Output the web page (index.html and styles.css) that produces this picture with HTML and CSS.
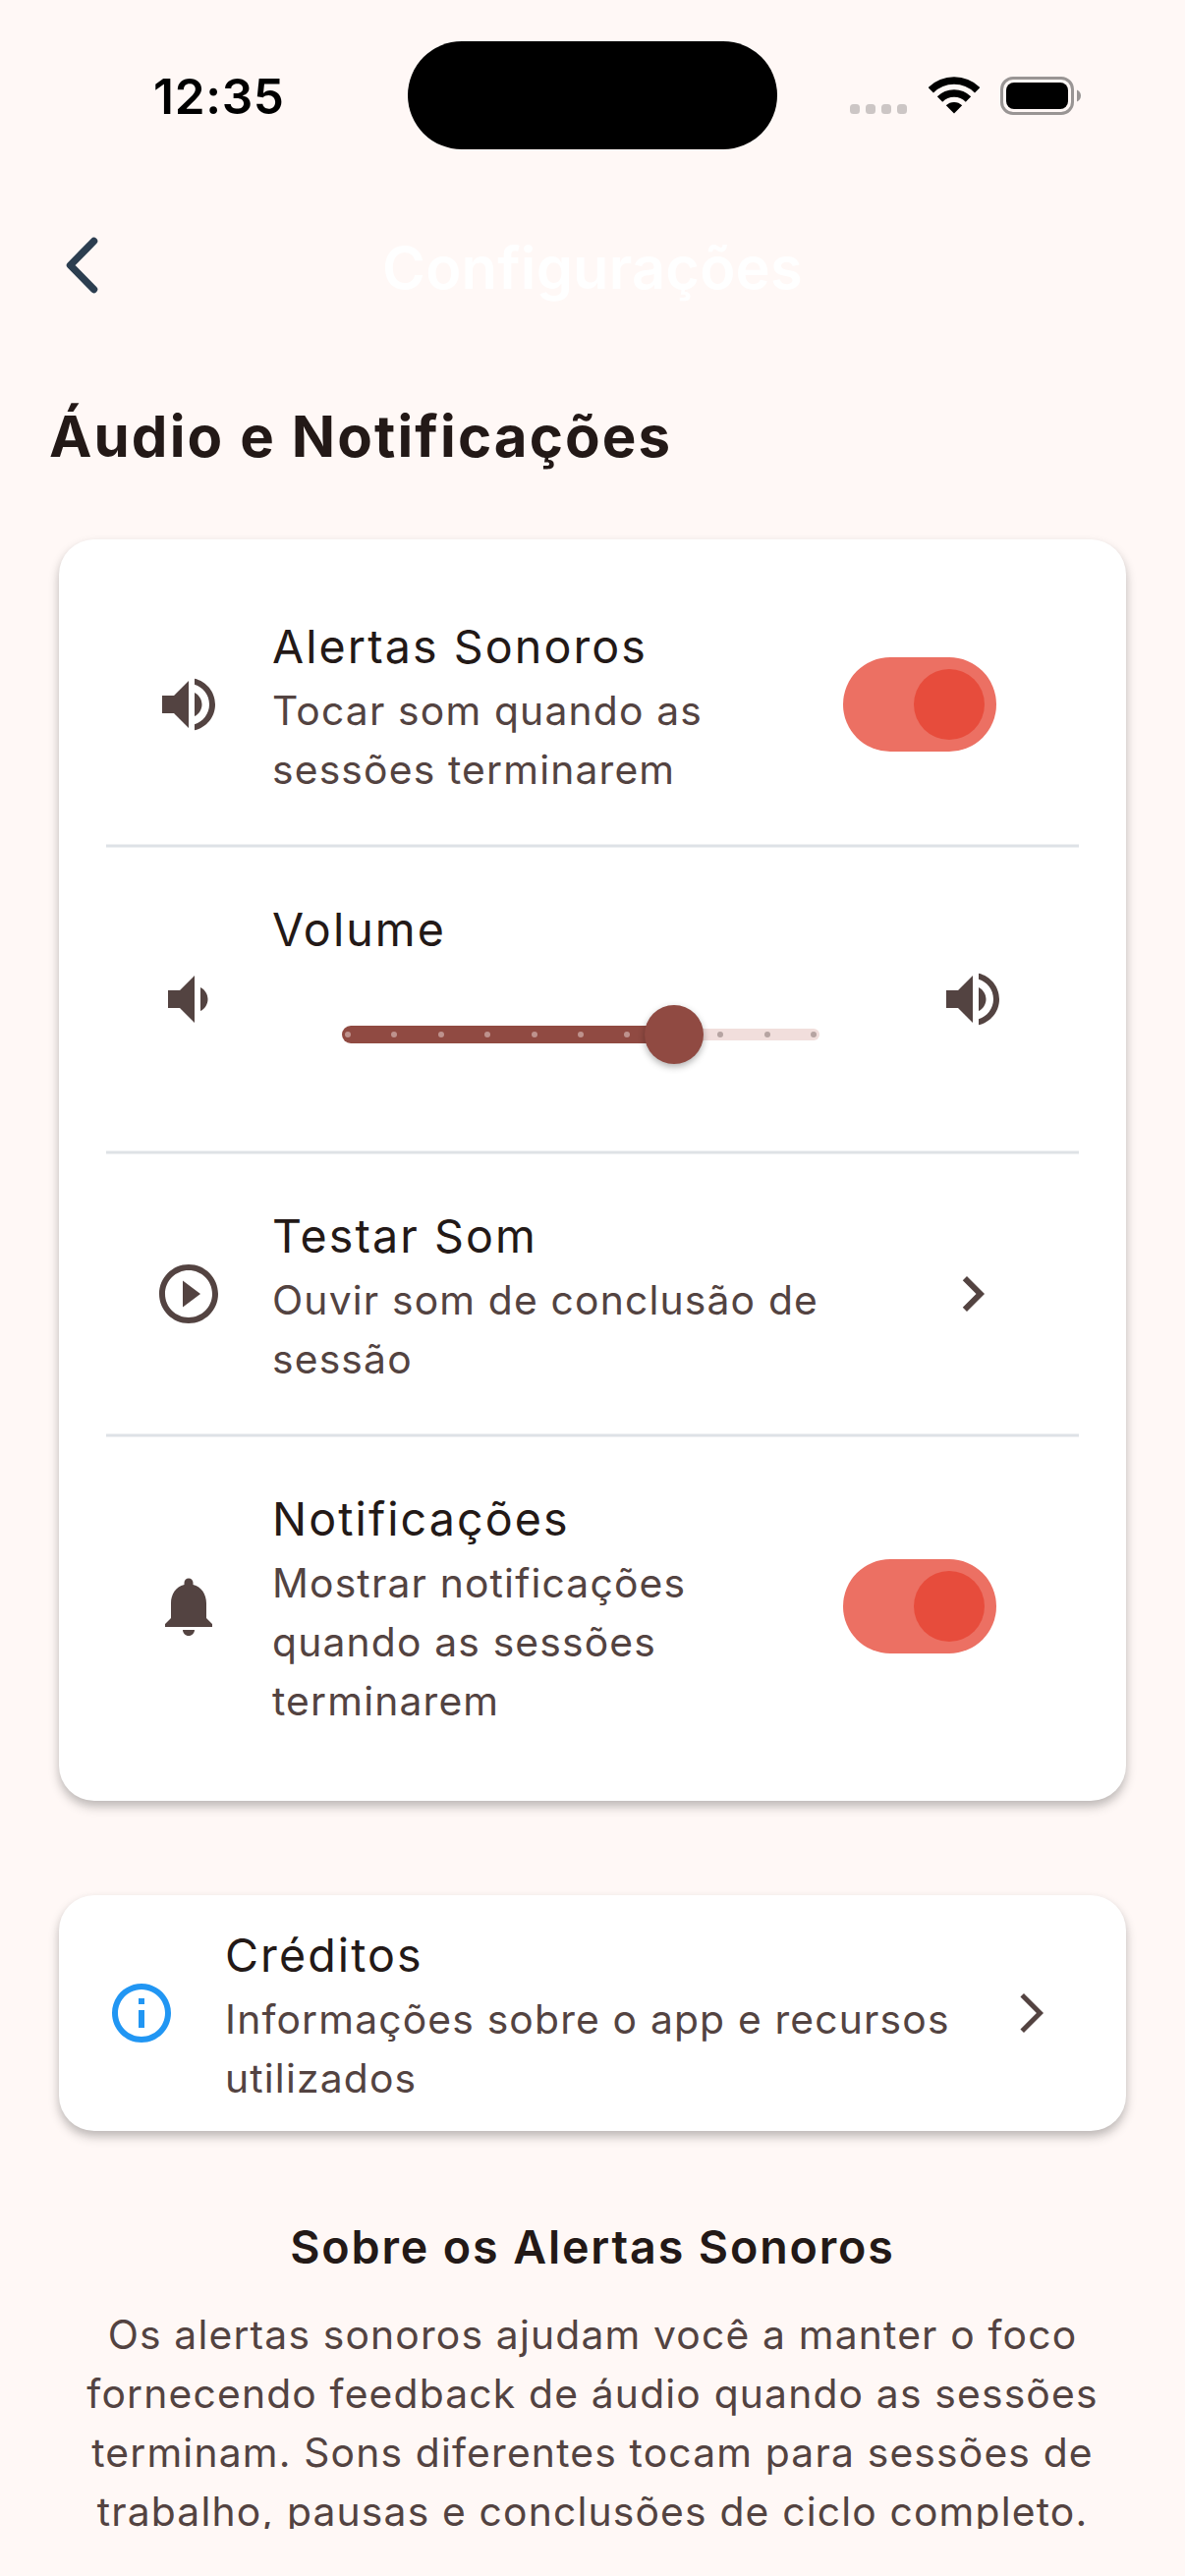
FILE: index.html
```html
<!DOCTYPE html>
<html lang="pt-BR">
<head>
<meta charset="utf-8">
<title>Configurações</title>
<link rel="stylesheet" href="styles.css">
</head>
<body>
<svg class="sprite" aria-hidden="true">
  <symbol id="volume-up" viewBox="0 0 24 24"><path d="M3 9v6h4l5 5V4L7 9H3zm11-1.03v8.05c1.48-.73 2.5-2.25 2.5-4.02s-1.02-3.29-2.5-4.03zM14 3.23v2.06c2.89.86 5 3.54 5 6.71s-2.11 5.85-5 6.71v2.06c4.01-.91 7-4.49 7-8.77s-2.99-7.86-7-8.77z"/></symbol>
  <symbol id="volume-down" viewBox="0 0 24 24"><path d="M18.5 12c0-1.77-1.02-3.29-2.5-4.03v8.05c1.48-.73 2.5-2.25 2.5-4.02zM5 9v6h4l5 5V4L9 9H5z"/></symbol>
  <symbol id="play-outline" viewBox="0 0 24 24"><path d="M10 16.5l6-4.5-6-4.5v9zM12 2C6.48 2 2 6.48 2 12s4.48 10 10 10 10-4.48 10-10S17.52 2 12 2zm0 18c-4.41 0-8-3.59-8-8s3.59-8 8-8 8 3.59 8 8-3.59 8-8 8z"/></symbol>
  <symbol id="bell" viewBox="0 0 24 24"><path d="M12 22c1.1 0 2-.9 2-2h-4c0 1.1.89 2 2 2zm6-6v-5c0-3.07-1.64-5.64-4.5-6.32V4c0-.83-.67-1.5-1.5-1.5s-1.5.67-1.5 1.5v.68C7.63 5.36 6 7.92 6 11v5l-2 2v1h16v-1l-2-2z"/></symbol>
  <symbol id="info" viewBox="0 0 24 24"><path d="M11 7h2v2h-2zm0 4h2v6h-2zm1-9C6.48 2 2 6.48 2 12s4.48 10 10 10 10-4.48 10-10S17.52 2 12 2zm0 18c-4.41 0-8-3.59-8-8s3.59-8 8-8 8 3.59 8 8-3.59 8-8 8z"/></symbol>
  <symbol id="chevron" viewBox="0 0 24 24"><path d="M10 6L8.59 7.41 13.17 12l-4.58 4.59L10 18l6-6z"/></symbol>
  <symbol id="arrow-forward" viewBox="0 0 24 24"><path d="M6.23 20.23L8 22l10-10L8 2 6.23 3.77 14.46 12z"/></symbol>
</svg>

<header class="status-bar">
  <div class="clock">12:35</div>
  <div class="island"></div>
  <div class="indicators">
    <div class="signal"><i></i><i></i><i></i><i></i></div>
    <svg class="wifi" viewBox="0 0 52 38">
      <path d="M2.3 13.8a33.5 33.5 0 0 1 47.4 0M11.5 23a20.5 20.5 0 0 1 29 0" fill="none" stroke="#000" stroke-width="7.6"/>
      <path d="M26 37.5l-8.2-8.2a11.6 11.6 0 0 1 16.4 0z"/>
    </svg>
    <svg class="battery" viewBox="0 0 82 39">
      <rect x="1.5" y="1.5" width="72" height="36" rx="11.5" fill="none" stroke="#999594" stroke-width="3"/>
      <rect x="6" y="6" width="63" height="27" rx="8"/>
      <path d="M78 13.5c2.4 1 4 3.300 4 6s-1.600 5-4 6z" fill="#999594"/>
    </svg>
  </div>
</header>

<nav class="app-bar">
  <svg class="back" viewBox="0 0 36 60"><path d="M29.500 5.500L5.500 30l24 24.500"/></svg>
  <h1 class="app-title">Configurações</h1>
</nav>

<main class="content">
  <h2 class="section-title">Áudio e Notificações</h2>

  <section class="card settings">
    <div class="tile">
      <svg class="icon"><use href="#volume-up"/></svg>
      <div class="text">
        <div class="title">Alertas Sonoros</div>
        <div class="subtitle">Tocar som quando as<br>sessões terminarem</div>
      </div>
      <div class="switch-slot"><div class="switch"></div></div>
    </div>
    <hr class="divider">
    <div class="tile">
      <svg class="icon"><use href="#volume-down"/></svg>
      <div class="text">
        <div class="title">Volume</div>
        <div class="slider">
          <div class="track">
            <div class="fill"></div>
            <div class="rest"></div>
            <div class="ticks"><i></i><i></i><i></i><i></i><i></i><i></i><i></i><i></i><i class="off"></i><i class="off"></i><i class="off"></i></div>
            <div class="thumb"></div>
          </div>
        </div>
      </div>
      <svg class="icon"><use href="#volume-up"/></svg>
    </div>
    <hr class="divider">
    <div class="tile">
      <svg class="icon"><use href="#play-outline"/></svg>
      <div class="text">
        <div class="title">Testar Som</div>
        <div class="subtitle">Ouvir som de conclusão de<br>sessão</div>
      </div>
      <svg class="icon"><use href="#chevron"/></svg>
    </div>
    <hr class="divider">
    <div class="tile">
      <svg class="icon"><use href="#bell"/></svg>
      <div class="text">
        <div class="title">Notificações</div>
        <div class="subtitle">Mostrar notificações<br>quando as sessões<br>terminarem</div>
      </div>
      <div class="switch-slot"><div class="switch"></div></div>
    </div>
  </section>

  <section class="card credits">
    <div class="tile">
      <svg class="icon icon-info"><use href="#info"/></svg>
      <div class="text">
        <div class="title">Créditos</div>
        <div class="subtitle">Informações sobre o app e recursos<br>utilizados</div>
      </div>
      <svg class="icon icon-small"><use href="#arrow-forward"/></svg>
    </div>
  </section>

  <section class="about">
    <h3 class="about-title">Sobre os Alertas Sonoros</h3>
    <p class="about-text">Os alertas sonoros ajudam você a manter o foco<br>fornecendo feedback de áudio quando as sessões<br>terminam. Sons diferentes tocam para sessões de<br>trabalho, pausas e conclusões de ciclo completo.</p>
  </section>
</main>
</body>
</html>
```
FILE: styles.css
```css
* {
  box-sizing: border-box;
  margin: 0;
  padding: 0;
}

body {
  width: 1206px;
  height: 2622px;
  overflow: hidden;
  background: #fff8f6;
  color: #231917;
  font-family: Inter, "Liberation Sans", sans-serif;
}

svg {
  display: block;
  flex: none;
}

.sprite {
  position: absolute;
  width: 0;
  height: 0;
}

/* Status bar */
.status-bar {
  display: grid;
  grid-template-columns: 415px 376px 415px;
  height: 186px;
}

.clock {
  padding: 68px 0 0 156px;
  color: #000;
  font-size: 49.5px;
  font-weight: 600;
  line-height: 60px;
  letter-spacing: 0.7px;
}

.island {
  height: 110px;
  margin-top: 42px;
  border-radius: 55px;
  background: #000;
}

.indicators {
  display: flex;
  align-items: flex-end;
  height: 117px;
  padding-left: 74px;
}

.signal {
  display: flex;
  gap: 6px;
  margin: 0 22px 1px 0;
}

.signal i {
  width: 10px;
  height: 10px;
  border-radius: 3.5px;
  background: #ccc6c5;
}

.wifi {
  width: 52px;
  height: 38px;
  margin: 0 21px 1px 0;
}

.battery {
  width: 82px;
  height: 39px;
}

/* App bar */
.app-bar {
  display: grid;
  grid-template-columns: 168px 1fr 168px;
  align-items: center;
  height: 168px;
}

.back {
  width: 36px;
  height: 60px;
  margin-left: 66px;
  fill: none;
  stroke: #2c3e50;
  stroke-width: 7.5;
  stroke-linecap: round;
  stroke-linejoin: round;
}

.app-title {
  padding-top: 4px;
  color: #fff;
  font-size: 59.5px;
  font-weight: 600;
  line-height: 72px;
  letter-spacing: 0.2px;
  text-align: center;
}

/* Scrolling content, cut off above the home indicator area */
.content {
  height: 2220px;
  padding: 48px 48px 0;
  overflow: hidden;
}

.section-title {
  padding-left: 2px;
  font-size: 58.2px;
  font-weight: 700;
  line-height: 84px;
  letter-spacing: 2.1px;
}

.card {
  margin: 0 12px;
  border-radius: 36px;
  background: #fff;
  box-shadow: 0 6px 11px rgba(0, 0, 0, 0.24), 0 3px 9px rgba(0, 0, 0, 0.04);
}

.settings {
  margin-top: 63px;
  padding: 48px;
}

.credits {
  margin-top: 96px;
}

.tile {
  display: flex;
  align-items: center;
  gap: 48px;
  padding: 24px 72px 24px 48px;
}

.text {
  flex: 1;
  min-width: 0;
  white-space: nowrap;
}

.title {
  height: 72px;
  padding: 1px 0 0 1px;
  font-size: 46.6px;
  line-height: 72px;
  letter-spacing: 2.08px;
}

.subtitle {
  padding-left: 1px;
  color: #534341;
  font-size: 40.8px;
  line-height: 60px;
  letter-spacing: 1.17px;
}

.icon {
  width: 72px;
  height: 72px;
  fill: #534341;
}

.icon-small {
  width: 48px;
  height: 48px;
}

.icon-info {
  fill: #2196f3;
}

.divider {
  height: 4px;
  margin: 22px 0;
  border: 0;
  background: linear-gradient(#eef0f2 1px, #dee2e6 1px, #dee2e6 3px, #eef0f2 3px);
}

/* Switch */
.switch-slot {
  display: flex;
  width: 180px;
  padding-left: 12px;
}

.switch {
  display: flex;
  justify-content: flex-end;
  width: 156px;
  height: 96px;
  padding: 12px;
  border-radius: 48px;
  background: #ec7063;
}

.switch::before {
  content: "";
  width: 72px;
  border-radius: 50%;
  background: #e74c3c;
}

/* Slider */
.slider {
  height: 144px;
  padding: 63px 72px;
}

.track {
  position: relative;
  display: flex;
  align-items: center;
  height: 18px;
}

.fill {
  width: 338px;
  height: 18px;
  border-radius: 9px 0 0 9px;
  background: #904a42;
}

.rest {
  flex: 1;
  height: 12px;
  border-radius: 0 6px 6px 0;
  background: #f1dedc;
}

.ticks {
  position: absolute;
  inset: 6px 3px;
  display: flex;
  justify-content: space-between;
}

.ticks i {
  width: 6px;
  height: 6px;
  border-radius: 50%;
  background: #be928d;
}

.ticks .off {
  background: #b6a4a2;
}

.thumb {
  position: absolute;
  top: -21px;
  left: 308px;
  width: 60px;
  height: 60px;
  border-radius: 50%;
  background: #904a42;
  box-shadow: 0 3px 7px rgba(0, 0, 0, 0.3);
}

/* About */
.about {
  margin-top: 81px;
  text-align: center;
  white-space: nowrap;
}

.about-title {
  height: 72px;
  padding-top: 1px;
  font-size: 46.6px;
  font-weight: 600;
  line-height: 72px;
  letter-spacing: 1.86px;
}

.about-text {
  margin-top: 24px;
  color: #534341;
  font-size: 40.8px;
  line-height: 60px;
  letter-spacing: 1.17px;
}
```
